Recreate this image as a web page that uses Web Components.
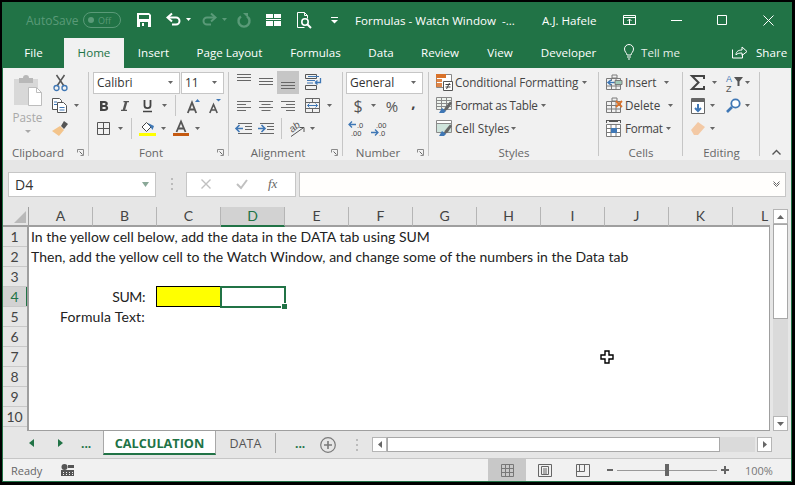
<!DOCTYPE html>
<html>
<head>
<meta charset="utf-8">
<title>Formulas - Watch Window</title>
<style>
html,body{margin:0;padding:0;background:#000;overflow:hidden;}
body{width:795px;height:485px;font-family:"Open Sans","Liberation Sans",sans-serif;font-size:12px;}
</style>
</head>
<body>
<xl-window>
  <xl-titlebar></xl-titlebar>
  <xl-tabs></xl-tabs>
  <xl-ribbon>
    <rb-group label="Clipboard" launcher style="width:86px"><rb-clipboard></rb-clipboard></rb-group>
    <rb-group label="Font" launcher style="width:140px">
      <rb-row>
        <xl-combo style="margin-left:4px;width:87px">Calibri</xl-combo>
        <xl-combo style="margin-left:1px;width:43px">11</xl-combo>
      </rb-row>
      <rb-row>
        <xl-icon name="bold" style="margin-left:11px"></xl-icon>
        <xl-icon name="italic" style="margin-left:13px"></xl-icon>
        <xl-icon name="under" style="margin-left:14px"></xl-icon>
        <xl-icon name="caret" style="margin-left:9px"></xl-icon>
        <xl-icon name="vline" style="margin-left:7px"></xl-icon>
        <xl-icon name="growfont" style="margin-left:11px"></xl-icon>
        <xl-icon name="shrinkfont" style="margin-left:9px"></xl-icon>
      </rb-row>
      <rb-row>
        <xl-icon name="borders" style="margin-left:8px"></xl-icon>
        <xl-icon name="caret" style="margin-left:7px"></xl-icon>
        <xl-icon name="vline" style="margin-left:7px"></xl-icon>
        <xl-icon name="fillcolor" style="margin-left:7px"></xl-icon>
        <xl-icon name="caret" style="margin-left:4px"></xl-icon>
        <xl-icon name="fontcolor" style="margin-left:6px"></xl-icon>
        <xl-icon name="caret" style="margin-left:5px"></xl-icon>
      </rb-row>
    </rb-group>
    <rb-group label="Alignment" launcher style="width:114px">
      <rb-row>
        <xl-icon name="valign" style="margin-left:8px;align-self:flex-start;margin-top:3px"></xl-icon>
        <xl-icon name="valign" style="margin-left:8px;align-self:flex-start;margin-top:7px"></xl-icon>
        <rb-on style="margin-left:4px"><xl-icon name="valign"></xl-icon></rb-on>
        <xl-icon name="wrap" style="margin-left:6px"></xl-icon>
      </rb-row>
      <rb-row>
        <xl-icon name="left" style="margin-left:8px"></xl-icon>
        <xl-icon name="center" style="margin-left:8px"></xl-icon>
        <xl-icon name="right" style="margin-left:8px"></xl-icon>
        <xl-icon name="merge" style="margin-left:10px"></xl-icon>
        <xl-icon name="caret" style="margin-left:6px"></xl-icon>
      </rb-row>
      <rb-row>
        <xl-icon name="outdent" style="margin-left:7px"></xl-icon>
        <xl-icon name="indent" style="margin-left:6px"></xl-icon>
        <xl-icon name="vline" style="margin-left:7px"></xl-icon>
        <xl-icon name="orient" style="margin-left:7px"></xl-icon>
        <xl-icon name="caret" style="margin-left:4px"></xl-icon>
      </rb-row>
    </rb-group>
    <rb-group label="Number" launcher style="width:86px">
      <rb-row><xl-combo style="margin-left:3px;width:77px">General</xl-combo></rb-row>
      <rb-row>
        <xl-icon name="dollar" style="margin-left:10px"></xl-icon>
        <xl-icon name="caret" style="margin-left:7px"></xl-icon>
        <xl-icon name="percent" style="margin-left:8px"></xl-icon>
        <xl-icon name="comma" style="margin-left:12px"></xl-icon>
      </rb-row>
      <rb-row>
        <xl-icon name="decinc" style="margin-left:6px"></xl-icon>
        <xl-icon name="decdec" style="margin-left:6px"></xl-icon>
      </rb-row>
    </rb-group>
    <rb-group label="Styles" style="width:170px">
      <rb-row><xl-icon name="condfmt" style="margin-left:7px"></xl-icon><rb-text style="width:126px;letter-spacing:-.1px">Conditional Formatting</rb-text><xl-icon name="caret"></xl-icon></rb-row>
      <rb-row><xl-icon name="fmttable" style="margin-left:7px"></xl-icon><rb-text style="width:85px;letter-spacing:-.3px">Format as Table</rb-text><xl-icon name="caret"></xl-icon></rb-row>
      <rb-row><xl-icon name="cellstyles" style="margin-left:7px"></xl-icon><rb-text style="width:55px">Cell Styles</rb-text><xl-icon name="caret"></xl-icon></rb-row>
    </rb-group>
    <rb-group label="Cells" style="width:84px">
      <rb-row><xl-icon name="insert" style="margin-left:7px"></xl-icon><rb-text style="width:38px">Insert</rb-text><xl-icon name="caret"></xl-icon></rb-row>
      <rb-row><xl-icon name="delete" style="margin-left:7px"></xl-icon><rb-text style="width:42px">Delete</rb-text><xl-icon name="caret"></xl-icon></rb-row>
      <rb-row><xl-icon name="format" style="margin-left:7px;margin-right:1px"></xl-icon><rb-text style="width:40px;letter-spacing:-.3px">Format</rb-text><xl-icon name="caret"></xl-icon></rb-row>
    </rb-group>
    <rb-group label="Editing" style="width:77px">
      <rb-row>
        <xl-icon name="sigma" style="margin-left:7px"></xl-icon>
        <xl-icon name="caret" style="margin-left:6px"></xl-icon>
        <xl-icon name="sort" style="margin-left:8px"></xl-icon>
        <xl-icon name="caret" style="margin-left:1px"></xl-icon>
      </rb-row>
      <rb-row>
        <xl-icon name="filldown" style="margin-left:8px"></xl-icon>
        <xl-icon name="caret" style="margin-left:4px"></xl-icon>
        <xl-icon name="find" style="margin-left:10px"></xl-icon>
        <xl-icon name="caret" style="margin-left:3px"></xl-icon>
      </rb-row>
      <rb-row>
        <xl-icon name="eraser" style="margin-left:8px"></xl-icon>
        <xl-icon name="caret" style="margin-left:4px"></xl-icon>
      </rb-row>
    </rb-group>
    <xl-icon name="chevup" style="margin:79px 0 0 12px"></xl-icon>
  </xl-ribbon>
  <xl-formula></xl-formula>
  <xl-sheet></xl-sheet>
  <xl-sheettabs></xl-sheettabs>
  <xl-status></xl-status>
</xl-window>

<script>
const D = '#6a6a6a', B = '#3f77b5', O = '#d9722a', W = '#fff', DIM = '#5a9a78';
const lines = (ys, widths, c, x) => ys.map((y, i) => {
  const w = widths[i % widths.length];
  const x0 = x === 'c' ? (14 - w) / 2 : x === 'r' ? 14 - w : 0;
  return `<path d="M${x0} ${y + .5}h${w}" stroke="${c || D}"/>`;
}).join('');
const tableGrid = (c) => `<path d="M.5 3.5h14v11H.5zM.5 7.5h14M.5 11h14M5.5 3.5v11M10 3.5v11" fill="none" stroke="${c || '#7a7a7a'}"/>`;
const brush = `<path d="M7 14.5l2-4 5-6 2 1.5-4 6-4 3z" fill="#666"/><path d="M3 16l3-5 4 3-2 2z" fill="${B}"/>`;
const ui = 'font-family="Open Sans"', ar = 'font-family="Liberation Sans"';

const ICONS = {
  save: [14, 14, `<path fill="${W}" fill-rule="evenodd" d="M0 0h12l2 2v12H0zM2 2v4h10V2zM3 9v5h8V9z"/><path fill="${W}" d="M5 10h2v3H5z"/>`],
  undo: [15, 14, `<path d="M3 4.5h7a3.5 3.5 0 0 1 0 7H6" fill="none" stroke="${W}" stroke-width="2"/><path d="M6 .5L1.5 4.5 6 8.5" fill="none" stroke="${W}" stroke-width="2"/>`],
  redo: [15, 14, `<path d="M12 4.5H5a3.5 3.5 0 0 0 0 7h4" fill="none" stroke="${DIM}" stroke-width="2"/><path d="M9 .5l4.5 4L9 8.5" fill="none" stroke="${DIM}" stroke-width="2"/>`],
  repeat: [14, 15, `<path d="M4 3.5a5.5 5.5 0 1 0 6 0" fill="none" stroke="${DIM}" stroke-width="2.4"/><path d="M6 0h5v5z" fill="${DIM}"/>`],
  arrange: [15, 12, `<path fill="${W}" d="M0 0h7v4H0zM8 0h7v4H8zM0 5h15v1H0zM0 7h7v5H0zM8 7h7v5H8z"/>`],
  preview: [15, 17, `<path d="M.5.5h7l3 3v3M.5.5v15h7" fill="none" stroke="${W}"/><path d="M7.5.5v3h3" fill="none" stroke="${W}"/><circle cx="8" cy="10" r="3.2" fill="none" stroke="${W}" stroke-width="1.6"/><path d="M10.5 12.5l3.5 3.5" stroke="${W}" stroke-width="2"/>`],
  qat: [7, 7, `<path d="M0 .5h7" stroke="${W}"/><path d="M0 3h7L3.5 6.5z" fill="${W}"/>`],
  ribbonopt: [13, 10, `<path d="M.5.5h12v9H.5zM.5 2.5h12" fill="none" stroke="${W}"/><path d="M6.5 4v5M4.5 6l2-2 2 2" fill="none" stroke="${W}"/>`],
  min: [11, 1, `<path d="M0 .5h11" stroke="${W}"/>`],
  max: [10, 10, `<path d="M.5.5h9v9h-9z" fill="none" stroke="${W}"/>`],
  close: [11, 11, `<path d="M.5.5l10 10M10.5.5l-10 10" fill="none" stroke="${W}"/>`],
  bulb: [10, 16, `<path d="M3 11c0-2-2.5-3-2.5-6a4.5 4.5 0 0 1 9 0c0 3-2.5 4-2.5 6z" fill="none" stroke="${W}"/><path d="M3 13h4M4 15h2" stroke="${W}"/>`],
  share: [16, 14, `<path d="M.5 4.5V13h10V9" fill="none" stroke="${W}"/><path d="M4 10c0-4 3-5 6-5V2l5 4.5-5 4V8c-3 0-5 .5-6 2z" fill="none" stroke="${W}"/>`],
  caret: [7, 4, `<path d="M1 0h5L3.5 3z" fill="#666"/>`],
  caretw: [7, 4, `<path d="M1 0h5L3.5 3z" fill="#fff"/>`],
  caretd: [7, 4, `<path d="M1 0h5L3.5 3z" fill="${DIM}"/>`],
  caretl: [6, 3, `<path d="M0 0h6L3 3z" fill="#a8a8a8"/>`],
  vline: [1, 21, `<path d="M.5 0v21" stroke="#c6c6c6"/>`],
  launcher: [7, 7, `<path d="M.5 3.5v-3h6v6h-3" fill="none" stroke="#8a8a8a"/><path d="M2.5 2.5l3 3" stroke="#666"/>`],
  paste: [28, 30, `<path d="M0 3h24v26H0z" fill="#d8d8d8"/><path d="M5 2h4a3 3 0 0 1 6 0h4v5H5z" fill="#b8b8b8"/><path d="M14.5 11.5h8l5 5v13h-13z" fill="#fff" stroke="#bdbdbd"/><path d="M22.5 11.5v5h5" fill="none" stroke="#bdbdbd"/>`],
  scissors: [15, 16, `<path d="M3.5 0L11 11M11.5 0L4 11" fill="none" stroke="#555" stroke-width="1.5"/><circle cx="3.5" cy="13" r="2.5" fill="none" stroke="${B}" stroke-width="1.3"/><circle cx="11.5" cy="13" r="2.5" fill="none" stroke="${B}" stroke-width="1.3"/>`],
  copy: [16, 15, `<path d="M.5.5h7l2 2v9H.5z" fill="#fff" stroke="#555"/><path d="M5.5 4.5h6l3 3v7h-9z" fill="#fff" stroke="#555"/><path d="M2 4h3M2 6.5h3M7.5 9.5h5M7.5 12h5" stroke="${B}"/>`],
  painter: [16, 15, `<path d="M9 5l3-5 4 3-4 5z" fill="#555"/><path d="M0 10l8-5 4 4-5 6z" fill="#f3c48b"/>`],
  bold: [8, 10, `<path fill="#444" fill-rule="evenodd" d="M0 0h4.5c4 0 4 4 2 4.7C9 5.3 9 10 4.5 10H0zM2.5 2v2h2c1.3 0 1.3-2 0-2zM2.5 6v2h2.3c1.4 0 1.4-2 0-2z"/>`],
  italic: [8, 10, `<path fill="#555" d="M2.5 0H8v1.3H6.3L4.2 8.7H6V10H0V8.7h1.7l2.1-7.4H2.5z"/>`],
  under: [9, 12, `<path fill="none" stroke="#444" stroke-width="1.8" d="M1.500 0v5.5c0 3.5 6 3.5 6 0V0"/><path d="M0 11.5h9" stroke="#444" stroke-width="1.5"/>`],
  growfont: [13, 14, `<path fill="none" stroke="#555" stroke-width="1.8" d="M.8 14L5 3.5 9.2 14M2.5 10.5h5"/><path d="M8 3l2.5-3L13 3z" fill="${B}"/>`],
  shrinkfont: [12, 14, `<path fill="none" stroke="#555" stroke-width="1.6" d="M.8 14l3.7-8.5L8.2 14M2 11h5"/><path d="M7 0h5L9.500 2.500z" fill="${B}"/>`],
  borders: [13, 13, `<path d="M.5.5h12v12H.5zM6.5.5v12M.5 6.5h12" fill="none" stroke="#555"/>`],
  fillcolor: [17, 15, `<path d="M3 6l4.5-4.5L12 6l-4.5 4.5z" fill="#fff" stroke="#444"/><path d="M9 2l6 3-1.5 4z" fill="${B}"/><path d="M0 12h17v3H0z" fill="#ff0"/>`],
  fontcolor: [16, 15, `<path d="M3.5 11L8 .5 12.5 11M5 7.5h6" fill="none" stroke="#555" stroke-width="1.8"/><path d="M0 12h16v3H0z" fill="#c55a11"/>`],
  valign: [14, 8, lines([0, 3, 6], [14, 14, 14], '#666')],
  wrap: [18, 17, `<path d="M.5.5h11v4H.5zM.5 11.5h11v4H.5z" fill="none" stroke="#555"/><path d="M3 2.5h11M2 6.5h8M2 9h6" stroke="${B}" fill="none"/><path d="M10 8.5h5.500V4M10 8.5l2.5-2M10 8.5l2.5 2" fill="none" stroke="${B}" stroke-width="1.3"/>`],
  left: [14, 10, lines([0, 3, 6, 9], [14, 9])],
  center: [14, 10, lines([0, 3, 6, 9], [14, 9], D, 'c')],
  right: [14, 10, lines([0, 3, 6, 9], [14, 9], D, 'r')],
  merge: [15, 15, `<path d="M.5.5h14v14H.5zM.5 4.5h14M.5 10.5h14M7.5.5v4M7.5 10.5v4" fill="none" stroke="#666"/><path d="M2.5 7.5h10M4.500 5.5l-2 2 2 2M10.5 5.5l2 2-2 2" fill="none" stroke="${B}"/>`],
  outdent: [16, 11, `<path d="M0 5.5h7M3.5 2L0 5.5 3.5 9" fill="none" stroke="${B}" stroke-width="1.6"/><path d="M2 .5h14M9 3.5h7M9 6.5h7M2 10.5h14" stroke="#666"/>`],
  indent: [16, 11, `<path d="M0 5.5h7M3.5 2L7 5.5 3.5 9" fill="none" stroke="${B}" stroke-width="1.6"/><path d="M2 .5h14M9 3.5h7M9 6.5h7M2 10.5h14" stroke="#666"/>`],
  orient: [16, 16, `<text x="1" y="10" transform="rotate(-40 5 8)" font-size="10" ${ar} font-style="italic" fill="#555">ab</text><path d="M2 15.5L14 7M10.5 6.5H15V11" fill="none" stroke="#555"/>`],
  dollar: [10, 18, `<text x="5" y="14.5" text-anchor="middle" font-size="16" ${ui} fill="#555">$</text>`],
  percent: [14, 16, `<text x="7" y="13.5" text-anchor="middle" font-size="15" ${ui} fill="#555">%</text>`],
  comma: [5, 14, `<text x="2.5" y="9" text-anchor="middle" font-size="15" font-weight="700" ${ui} fill="#444">,</text>`],
  decinc: [16, 15, `<path d="M0 3.5h7M3 .5l-3 3 3 3" fill="none" stroke="${B}" stroke-width="1.3"/><text x="8" y="6.5" font-size="7.5" fill="#444" ${ar}>.0</text><text x="2" y="14.5" font-size="7.5" fill="#444" ${ar}>.00</text>`],
  decdec: [16, 15, `<text x="5" y="6.5" font-size="7.5" fill="#444" ${ar}>.00</text><path d="M0 11.5h7M4 8.5l3 3-3 3" fill="none" stroke="${B}" stroke-width="1.3"/><text x="8" y="14.5" font-size="7.5" fill="#444" ${ar}>.0</text>`],
  condfmt: [17, 17, `<path d="M.5.5h15v13H.5z" fill="#fff" stroke="#888"/><path d="M0 0h5v4H0zM5 0h5v4H5z" fill="${O}"/><path d="M0 5h6v3H0zM0 9h6v4H0z" fill="${O}" opacity=".85"/><path d="M7.5 7.5h9v9h-9z" fill="#fff" stroke="#555"/><path d="M9.5 10.5h5M9.5 13h5M13.5 9l-3 6" fill="none" stroke="#444"/>`],
  fmttable: [17, 17, `<path d="M.5.5h15v12H.5zM.5 3.5h15M.5 6.5h15M.5 9.5h15M5.5.5v12M10.5.5v12" fill="#eef3ee" stroke="#8a8a8a"/>${brush}`],
  cellstyles: [17, 17, `<path d="M.5.5h15v12H.5zM.5 3.5h15" fill="#fff" stroke="#8a8a8a"/><path d="M1 4h14v8H1z" fill="#cfe4dc"/>${brush}`],
  insert: [17, 16, `${tableGrid()}<path d="M6 0h5v3H6z" fill="none" stroke="#7a7a7a"/><path d="M1 7.5h6" stroke="#fff" stroke-width="3"/><path d="M3 7.5h5M5 5L2 7.5 5 10" fill="none" stroke="${B}" stroke-width="1.6"/><path d="M9 5.5h7v4H9z" fill="#9fc9b8" stroke="#7a7a7a"/>`],
  delete: [17, 16, `${tableGrid()}<path d="M6 0h5v3H6z" fill="none" stroke="#7a7a7a"/><path d="M10 3l6 6M16 3l-6 6" stroke="${O}" stroke-width="1.8"/>`],
  format: [16, 17, `<path d="M.5.5h14M.5 0v3M14.5 0v3M3 1.5h9" stroke="#555" fill="none"/><path d="M.5 4.5h14v12H.5zM.5 8.5h14M.5 12.5h14M5 4.5v12M10 4.5v12" fill="#fff" stroke="#7a7a7a"/><path d="M5 8h6v5H5z" fill="${B}"/>`],
  sigma: [15, 15, `<path d="M14 4V1H2l6.5 6.5L2 14h12v-3" fill="none" stroke="#444" stroke-width="2"/>`],
  sort: [17, 20, `<text x="0" y="9" font-size="9" ${ar} fill="${B}">A</text><text x="0" y="19" font-size="9" ${ar} fill="#555">Z</text><path d="M8 4h9l-3.5 4.5V13h-2V8.5z" fill="#555"/>`],
  filldown: [14, 16, `<path d="M.5.5h13v15H.5z" fill="#fff" stroke="#666"/><path d="M1 1h12v3H1z" fill="#666"/><path d="M7 6v7M4 10l3 3 3-3" fill="none" stroke="${B}" stroke-width="2"/>`],
  find: [15, 15, `<circle cx="9.5" cy="5.5" r="4.2" fill="#fff" stroke="${B}" stroke-width="1.8"/><path d="M6 9l-5 5" stroke="${B}" stroke-width="2.6"/>`],
  eraser: [14, 13, `<path d="M0 8l7-8 7 5-7 8H3z" fill="#f3c9a5"/>`],
  chevup: [9, 5, `<path d="M.5 4.5l4-4 4 4" fill="none" stroke="#555" stroke-width="1.4"/>`],
  nameArrow: [7, 5, `<path d="M0 0h7L3.5 5z" fill="#8aa898"/>`],
  x: [10, 10, `<path d="M.5.5l9 9M9.5.5l-9 9" stroke="#c0c0c0" stroke-width="1.4"/>`],
  check: [12, 10, `<path d="M1 5l4 4 6-8" fill="none" stroke="#c0c0c0" stroke-width="2"/>`],
  chevdown: [7, 6, `<path d="M.5.5l3 3 3-3M.5 2.5l3 3 3-3" fill="none" stroke="#666"/>`],
  corner: [12, 12, `<path d="M12 0v12H0z" fill="#b9b9b9"/>`],
  tl: [5, 8, `<path d="M5 0v8L0 4z" fill="#217346"/>`],
  tr: [5, 8, `<path d="M0 0v8l5-4z" fill="#217346"/>`],
  plus: [16, 16, `<circle cx="8" cy="8" r="7.3" fill="none" stroke="#7a7a7a" stroke-width="1.2"/><path d="M4 8h8M8 4v8" stroke="#7a7a7a" stroke-width="1.6"/>`],
  vdots: [2, 12, `<path d="M0 0h2v2H0zM0 5h2v2H0zM0 10h2v2H0z" fill="#bbb"/>`],
  sl: [4, 7, `<path d="M4 0v7L0 3.5z" fill="#666"/>`],
  sr: [4, 7, `<path d="M0 0v7l4-3.5z" fill="#666"/>`],
  su: [7, 4, `<path d="M0 4h7L3.5 0z" fill="#666"/>`],
  macro: [13, 12, `<circle cx="3.5" cy="3" r="3" fill="#555"/><path d="M7 1h6v3H7zM0 6h13v6H0z" fill="#555"/><path d="M2 8h1v1H2zM5 8h1v1H5zM8 8h1v1H8zM11 8h1v1h-1zM2 10h1v1H2zM5 10h1v1H5zM8 10h1v1H8zM11 10h1v1h-1z" fill="#f1f1f1"/>`],
  vnormal: [13, 13, `<path d="M.5.5h12v12H.5zM4.5.5v12M8.5.5v12M.5 4.5h12M.5 8.5h12" fill="none" stroke="#777"/>`],
  vpage: [14, 13, `<path d="M.5.5h13v12H.5z" fill="none" stroke="#666"/><path d="M3.5 2.5h7v8h-7zM5 5h4M5 7h4M5 9h4" fill="none" stroke="#666"/>`],
  vbreak: [14, 13, `<path d="M.5.5h13v12H.5zM.5 7.5h8M8.5.5v7M3.5.5v7" fill="none" stroke="#666"/>`],
  cross: [14, 14, `<path d="M5 1h4v4h4v4H9v4H5V9H1V5h4z" fill="#fff" stroke="#000" stroke-width="1.4"/>`]
};

class XlIcon extends HTMLElement{
  constructor(){
    super();
    this.attachShadow({ mode: 'open' });
  }
  connectedCallback(){
    const ic = ICONS[this.getAttribute('name')];
    this.shadowRoot.innerHTML = `
    <style>
      :host{ display:block; flex:none; line-height:0; width:${ic[0]}px; height:${ic[1]}px; }
      svg{ display:block; overflow:visible; }
    </style>
    <svg width="${ic[0]}" height="${ic[1]}" viewBox="0 0 ${ic[0]} ${ic[1]}">${ic[2]}</svg>`;
  }
}

class XlWindow extends HTMLElement{
  constructor(){
    super();
    this.attachShadow({ mode: 'open' }).innerHTML = `
    <style>
      :host{
        display:flex; flex-direction:column; box-sizing:border-box;
        width:790px; height:480px; margin:2px 0 0 2px;
        background:#e6e6e6; border:1px solid #217346; border-top:0;
        overflow:hidden; color:#262626;
      }
    </style>
    <slot></slot>`;
  }
}

class XlTitlebar extends HTMLElement{
  constructor(){
    super();
    this.attachShadow({ mode: 'open' }).innerHTML = `
    <style>
      :host{
        display:flex; align-items:center; flex:none; height:36px;
        background:#217346; color:#fff; font-size:11.6px; white-space:nowrap;
      }
      .auto{ color:#5a9a78; margin-left:23px; width:50px; font-size:12px; }
      .toggle{
        box-sizing:border-box; width:38px; height:16px; margin-left:7px;
        border:1px solid #5a9a78; border-radius:8px; color:#5a9a78;
        display:flex; align-items:center; font-size:9px; padding-left:4px; gap:4px;
      }
      .toggle i{ width:6px; height:6px; border-radius:50%; background:#5a9a78; }
      .title{ width:187px; }
      .user{ width:81px; }
    </style>
    <span class="auto">AutoSave</span>
    <span class="toggle"><i></i>Off</span>
    <xl-icon name="save" style="margin-left:16px"></xl-icon>
    <xl-icon name="undo" style="margin-left:15px"></xl-icon>
    <xl-icon name="caretw" style="margin-left:4px"></xl-icon>
    <xl-icon name="redo" style="margin-left:10px"></xl-icon>
    <xl-icon name="caretd" style="margin-left:4px"></xl-icon>
    <xl-icon name="repeat" style="margin-left:9px"></xl-icon>
    <xl-icon name="arrange" style="margin-left:15px"></xl-icon>
    <xl-icon name="preview" style="margin-left:16px"></xl-icon>
    <xl-icon name="qat" style="margin-left:19px"></xl-icon>
    <span class="title" style="margin-left:17px">Formulas - Watch Window &nbsp;-...</span>
    <span class="user">A.J. Hafele</span>
    <xl-icon name="ribbonopt"></xl-icon>
    <xl-icon name="min" style="margin-left:35px"></xl-icon>
    <xl-icon name="max" style="margin-left:35px"></xl-icon>
    <xl-icon name="close" style="margin-left:36px"></xl-icon>`;
  }
}

class XlTabs extends HTMLElement{
  constructor(){
    super();
    const tabs = [['File',61],['Home',60,1],['Insert',59],['Page Layout',93],['Formulas',79],['Data',52],['Review',66],['View',54],['Developer',83]];
    this.attachShadow({ mode: 'open' }).innerHTML = `
    <style>
      :host{
        display:flex; flex:none; height:30px; background:#217346; color:#fff;
        font-size:11.6px; white-space:nowrap;
      }
      div{ display:flex; align-items:center; justify-content:center; flex:none; box-sizing:border-box; padding-bottom:2px; }
      .on{ background:#f1f1f1; color:#217346; }
      .tell{ margin-left:14px; gap:7px; width:60px; justify-content:flex-start; color:#e4efe9; }
      .share{ margin-left:48px; gap:8px; justify-content:flex-start; }
    </style>
    ${tabs.map(t => `<div style="width:${t[1]}px" class="${t[2] ? 'on' : ''}">${t[0]}</div>`).join('')}
    <div class="tell"><xl-icon name="bulb"></xl-icon>Tell me</div>
    <div class="share"><xl-icon name="share"></xl-icon>Share</div>`;
  }
}

class XlRibbon extends HTMLElement{
  constructor(){
    super();
    this.attachShadow({ mode: 'open' }).innerHTML = `
    <style>
      :host{
        display:flex; flex:none; box-sizing:border-box; height:92px; padding-top:3px;
        background:#f1f1f1; font-size:11.7px; color:#444;
      }
    </style>
    <slot></slot>`;
  }
}

class RbGroup extends HTMLElement{
  constructor(){
    super();
    this.attachShadow({ mode: 'open' });
  }
  connectedCallback(){
    const launcher = this.hasAttribute('launcher');
    this.shadowRoot.innerHTML = `
    <style>
      :host{
        display:flex; flex-direction:column; flex:none; box-sizing:border-box; height:89px;
        background:linear-gradient(#c6c6c6,#c6c6c6) right 0 top 1px / 1px 84px no-repeat;
      }
      .body{ height:73px; flex:none; }
      .foot{ display:flex; align-items:center; height:16px; flex:none; color:#666; font-size:11.5px; }
      .name{ flex:1; text-align:center; }
      .launch{ width:16px; display:flex; justify-content:center; padding-right:1px; box-sizing:border-box; }
    </style>
    <div class="body"><slot></slot></div>
    <div class="foot"><span class="name">${this.getAttribute('label')}</span>${launcher ? '<span class="launch"><xl-icon name="launcher"></xl-icon></span>' : ''}</div>`;
  }
}

class RbRow extends HTMLElement{
  constructor(){
    super();
    this.attachShadow({ mode: 'open' }).innerHTML = `
    <style>:host{ display:flex; align-items:center; height:23px; white-space:nowrap; }</style>
    <slot></slot>`;
  }
}

class RbOn extends HTMLElement{
  constructor(){
    super();
    this.attachShadow({ mode: 'open' }).innerHTML = `
    <style>:host{ display:flex; flex:none; justify-content:center; align-items:flex-end; box-sizing:border-box; width:22px; height:23px; padding-bottom:4px; background:#c6c6c6; }</style>
    <slot></slot>`;
  }
}

class RbText extends HTMLElement{
  constructor(){
    super();
    this.attachShadow({ mode: 'open' }).innerHTML = `
    <style>:host{ display:block; flex:none; margin-left:2px; padding-bottom:2px; color:#444; font-size:11.7px; }</style>
    <slot></slot>`;
  }
}

class XlCombo extends HTMLElement{
  constructor(){
    super();
    this.attachShadow({ mode: 'open' }).innerHTML = `
    <style>
      :host{
        display:flex; align-items:center; justify-content:space-between; box-sizing:border-box;
        height:22px; flex:none; background:#fff; border:1px solid #c6c6c6; padding:0 5px 0 3px;
        color:#333; font-size:12px;
      }
    </style>
    <slot></slot><xl-icon name="caret"></xl-icon>`;
  }
}

class RbClipboard extends HTMLElement{
  constructor(){
    super();
    this.attachShadow({ mode: 'open' }).innerHTML = `
    <style>
      :host{ display:flex; }
      .paste{ display:flex; flex-direction:column; align-items:center; width:49px; padding-top:5px; box-sizing:border-box; color:#a8a8a8; }
      .paste span{ margin-top:3px; line-height:16px; }
      .paste xl-icon:last-child{ margin-top:5px; }
      .side{ display:flex; flex-direction:column; }
    </style>
    <div class="paste"><xl-icon name="paste"></xl-icon><span>Paste</span><xl-icon name="caretl"></xl-icon></div>
    <div class="side">
      <rb-row><xl-icon name="scissors" style="margin-left:1px"></xl-icon></rb-row>
      <rb-row><xl-icon name="copy"></xl-icon><xl-icon name="caret" style="margin-left:5px"></xl-icon></rb-row>
      <rb-row><xl-icon name="painter"></xl-icon></rb-row>
    </div>`;
  }
}

class XlFormula extends HTMLElement{
  constructor(){
    super();
    this.attachShadow({ mode: 'open' }).innerHTML = `
    <style>
      :host{ display:flex; align-items:center; flex:none; height:47px; padding:1px 5px 0 5px; box-sizing:border-box; }
      .box{ box-sizing:border-box; height:25px; background:#fff; border:1px solid #c6c6c6; display:flex; align-items:center; flex:none; }
      .name{ width:148px; justify-content:space-between; padding:0 6px; font-size:14px; color:#333; }
      .fx{ width:110px; margin-left:30px; }
      .input{ width:487px; margin-left:3px; justify-content:flex-end; padding-right:5px; background:#fffefc; }
      .fxt{ font:italic 13px "Liberation Serif",serif; color:#666; margin-left:20px; }
    </style>
    <div class="box name">D4<xl-icon name="nameArrow"></xl-icon></div>
    <xl-icon name="vdots" style="margin-left:15px;margin-right:-17px"></xl-icon>
    <div class="box fx">
      <xl-icon name="x" style="margin-left:14px"></xl-icon>
      <xl-icon name="check" style="margin-left:25px"></xl-icon>
      <span class="fxt">fx</span>
    </div>
    <div class="box input"><xl-icon name="chevdown"></xl-icon></div>`;
  }
}

class XlSheet extends HTMLElement{
  constructor(){
    super();
    const cols = 'ABCDEFGHIJKL'.split('');
    const rows = [1,2,3,4,5,6,7,8,9,10,''];
    this.attachShadow({ mode: 'open' }).innerHTML = `
    <style>
      :host{
        display:grid; flex:none; grid-template-columns:26px 741px 21px; grid-template-rows:20px 204px;
        height:224px; font-family:Lato,"Liberation Sans",sans-serif; font-size:14px; color:#222;
      }
      .corner{ background:#e6e6e6; border-bottom:2px solid #9f9f9f; border-right:1px solid #9f9f9f; box-sizing:border-box; display:flex; align-items:flex-end; justify-content:flex-end; padding:0 2px 2px 0; }
      .cols{ display:grid; grid-template-columns:repeat(12,64px); overflow:hidden; }
      .cols div{ box-sizing:border-box; border-bottom:2px solid #9f9f9f; border-right:1px solid #b5b5b5; text-align:center; line-height:18px; color:#444; }
      .cols div.sel{ background:#d2d2d2; border-bottom-color:#217346; color:#217346; }
      .heads{ overflow:hidden; border-right:2px solid #9f9f9f; box-sizing:border-box; }
      .heads div{ height:20px; box-sizing:border-box; border-bottom:1px solid #c9c9c9; text-align:center; line-height:19px; color:#444; padding-right:1px; }
      .heads div.sel{ background:#d2d2d2; color:#217346; box-shadow:inset -1px 0 0 #217346; }
      .cells{
        position:relative; background:#fff; box-sizing:border-box; overflow:hidden;
        border-right:1px solid #9f9f9f; border-bottom:1px solid #9f9f9f;
        display:grid; grid-template-columns:repeat(12,64px); grid-auto-rows:20px;
      }
      .line{ grid-column:1 / -1; white-space:nowrap; padding-left:2px; line-height:20px; letter-spacing:.02px; }
      .lab{ grid-column:1 / 3; text-align:right; padding-right:12px; line-height:20px; }
      .yellow{ grid-column:3; background:#ff0; border:1px solid #000; margin:-1px 0 0 -1px; }
      .active{ grid-column:4; position:relative; border:2px solid #217346; margin:-1px -1px -1px -1px; }
      .active i{ position:absolute; right:-4px; bottom:-4px; width:5px; height:5px; background:#217346; border:1px solid #fff; }
      .cursor{ position:absolute; left:571px; top:123px; }
      .scroll{ grid-column:3; grid-row:1 / 3; display:flex; flex-direction:column; padding:2px 3px 0 3px; box-sizing:border-box; width:21px; }
      .btn{ box-sizing:border-box; flex:none; height:15px; background:#fff; border:1px solid #b5b5b5; display:flex; align-items:center; justify-content:center; }
      .thumb{ flex:none; height:95px; box-sizing:border-box; background:#fff; border:1px solid #a8a8a8; }
      .track{ flex:1; background:#dadada; }
      .flip{ transform:scaleY(-1); }
    </style>
    <div class="corner"><xl-icon name="corner"></xl-icon></div>
    <div class="cols">${cols.map(c => `<div class="${c === 'D' ? 'sel' : ''}">${c}</div>`).join('')}</div>
    <div class="scroll">
      <div class="btn"><xl-icon name="su"></xl-icon></div>
      <div class="thumb"></div>
      <div class="track"></div>
      <div class="btn"><xl-icon name="su" class="flip"></xl-icon></div>
    </div>
    <div class="heads">${rows.map(r => `<div class="${r === 4 ? 'sel' : ''}">${r}</div>`).join('')}</div>
    <div class="cells">
      <div class="line">In the yellow cell below, add the data in the DATA tab using SUM</div>
      <div class="line">Then, add the yellow cell to the Watch Window, and change some of the numbers in the Data tab</div>
      <div class="line"></div>
      <div class="lab" style="letter-spacing:-.4px">SUM:</div><div class="yellow"></div><div class="active"><i></i></div><div style="grid-column:5 / -1"></div>
      <div class="lab" style="letter-spacing:.2px">Formula Text:</div>
      <xl-icon class="cursor" name="cross"></xl-icon>
    </div>`;
  }
}

class XlSheettabs extends HTMLElement{
  constructor(){
    super();
    this.attachShadow({ mode: 'open' }).innerHTML = `
    <style>
      :host{
        display:flex; align-items:flex-start; flex:none; height:27px; white-space:nowrap;
        font-size:12.5px; color:#217346;
      }
      .nav{ display:flex; align-items:center; height:24px; }
      .dots{ font-weight:700; font-size:12px; color:#217346; }
      .tab{
        box-sizing:border-box; display:flex; align-items:center; justify-content:center; height:24px; width:113px; padding-top:1px;
        background:#fff; border-left:1px solid #a8a8a8; border-right:1px solid #a8a8a8; border-bottom:2px solid #217346;
        font-weight:700; font-size:12.7px;
      }
      .data{ width:60px; display:flex; align-items:center; justify-content:center; color:#555; border-right:1px solid #a8a8a8; margin-top:2px; height:20px; padding-top:1px; box-sizing:border-box; }
      .hbar{ display:flex; align-items:center; margin-top:6px; }
      .btn{ box-sizing:border-box; width:15px; height:15px; background:#fff; border:1px solid #b5b5b5; display:flex; align-items:center; justify-content:center; }
      .thumb{ box-sizing:border-box; width:333px; height:15px; background:#fff; border:1px solid #a8a8a8; }
      .track{ width:35px; height:15px; background:#dadada; }
    </style>
    <div class="nav">
      <xl-icon name="tl" style="margin-left:26px"></xl-icon>
      <xl-icon name="tr" style="margin-left:24px"></xl-icon>
      <span class="dots" style="margin-left:18px;width:22px">...</span>
    </div>
    <div class="tab">CALCULATION</div>
    <div class="data">DATA</div>
    <div class="nav">
      <span class="dots" style="margin-left:19px;width:25px">...</span>
      <xl-icon name="plus" style="margin-top:3px"></xl-icon>
      <xl-icon name="vdots" style="margin:3px 0 0 20px"></xl-icon>
    </div>
    <div class="hbar" style="margin-left:14px">
      <div class="btn"><xl-icon name="sl"></xl-icon></div>
      <div class="thumb"></div>
      <div class="track"></div>
      <div class="btn" style="margin-left:2px"><xl-icon name="sr"></xl-icon></div>
    </div>`;
  }
}

class XlStatus extends HTMLElement{
  constructor(){
    super();
    this.attachShadow({ mode: 'open' }).innerHTML = `
    <style>
      :host{
        display:flex; align-items:center; flex:none; box-sizing:border-box; height:23px;
        background:#f1f1f1; border-top:1px solid #c6c6c6; color:#666; font-size:11px; white-space:nowrap;
      }
      .ready{ margin-left:8px; width:50px; }
      .mode{ align-self:stretch; width:38px; background:#c8c8c8; display:flex; align-items:center; justify-content:center; margin-left:414px; }
      .minus{ width:6px; height:2px; background:#666; margin-left:17px; }
      .slider{ width:100px; height:1px; background:#999; margin-left:4px; display:flex; align-items:center; padding-left:48px; box-sizing:border-box; }
      .slider i{ width:4px; height:12px; background:#666; flex:none; }
      .zplus{ margin-left:4px; width:8px; height:8px; background:linear-gradient(#666,#666) center / 8px 2px no-repeat, linear-gradient(#666,#666) center / 2px 8px no-repeat; }
      .pct{ margin-left:16px; color:#777; }
    </style>
    <span class="ready">Ready</span>
    <xl-icon name="macro"></xl-icon>
    <span class="mode"><xl-icon name="vnormal"></xl-icon></span>
    <xl-icon name="vpage" style="margin-left:12px"></xl-icon>
    <xl-icon name="vbreak" style="margin-left:24px"></xl-icon>
    <span class="minus"></span>
    <span class="slider"><i></i></span>
    <span class="zplus"></span>
    <span class="pct">100%</span>`;
  }
}

customElements.define('xl-icon', XlIcon);
customElements.define('xl-window', XlWindow);
customElements.define('xl-titlebar', XlTitlebar);
customElements.define('xl-tabs', XlTabs);
customElements.define('xl-ribbon', XlRibbon);
customElements.define('rb-group', RbGroup);
customElements.define('rb-row', RbRow);
customElements.define('rb-on', RbOn);
customElements.define('rb-text', RbText);
customElements.define('xl-combo', XlCombo);
customElements.define('rb-clipboard', RbClipboard);
customElements.define('xl-formula', XlFormula);
customElements.define('xl-sheet', XlSheet);
customElements.define('xl-sheettabs', XlSheettabs);
customElements.define('xl-status', XlStatus);
</script>
</body>
</html>
